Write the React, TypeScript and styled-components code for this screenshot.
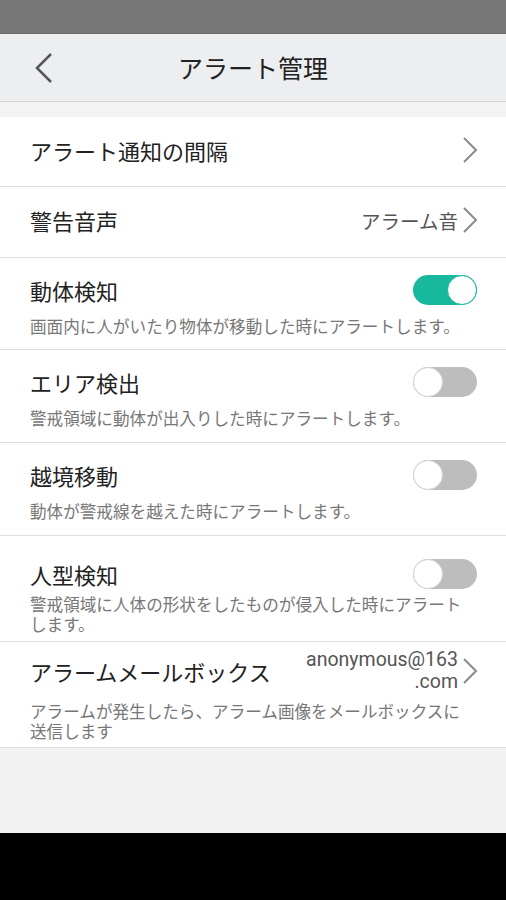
import React from "react";
import styled, { createGlobalStyle } from "styled-components";

const GlobalStyle = createGlobalStyle`
  html, body { margin: 0; padding: 0; }
  body {
    font-family: "Noto Sans CJK JP", "Noto Sans", sans-serif;
    background: #f2f2f2;
  }
  * { box-sizing: border-box; }
`;

const Screen = styled.div`
  width: 506px;
  height: 900px;
  display: flex;
  flex-direction: column;
  background: #f2f2f2;
  overflow: hidden;
`;

const StatusBar = styled.div`
  height: 34px;
  flex: none;
  background: #777777;
  border-bottom: 1px solid #6a6a6a;
`;

const Header = styled.header`
  height: 68px;
  flex: none;
  display: grid;
  grid-template-columns: 80px 1fr 80px;
  align-items: center;
  background: #eceef0;
  border-bottom: 1px solid #d2d4d6;
`;

const BackButton = styled.div`
  display: flex;
  align-items: center;
  padding-left: 34px;
  padding-top: 1px;
`;

const Title = styled.h1`
  margin: 0 0 2px;
  text-align: center;
  font-size: 25px;
  font-weight: 400;
  color: #222;
`;

const Spacer = styled.div`
  height: 15px;
  flex: none;
  background: #f3f3f3;
`;

const List = styled.div`
  flex: none;
  display: flex;
  flex-direction: column;
  background: #fff;
`;

const NavRow = styled.div<{ $h: number }>`
  height: ${(p) => p.$h}px;
  display: flex;
  align-items: center;
  justify-content: space-between;
  padding: 0 28px 4px 30px;
  border-bottom: 1px solid #dedede;
  background: #fff;
`;

const ToggleRow = styled.div<{ $pt: number; $gap: number; $pb: number }>`
  display: flex;
  flex-direction: column;
  padding: ${(p) => p.$pt}px 28px ${(p) => p.$pb}px 30px;
  gap: ${(p) => p.$gap}px;
  border-bottom: 1px solid #dedede;
  background: #fff;
`;

const TitleLine = styled.div`
  display: flex;
  align-items: center;
  justify-content: space-between;
  min-height: 30px;
`;

const Label = styled.span`
  font-size: 22px;
  line-height: 30px;
  color: #222;
`;

const Sub = styled.p`
  margin: 0;
  width: 440px;
  font-size: 16.6px;
  line-height: 20px;
  color: #777;
`;

const Value = styled.div`
  display: flex;
  align-items: center;
  gap: 4px;
`;

const ValueText = styled.span`
  font-size: 19.5px;
  color: #555;
`;

const EmailText = styled.span`
  font-family: Roboto, "Noto Sans", sans-serif;
  font-size: 19.5px;
  line-height: 22px;
  color: #555;
  text-align: right;
  width: 156px;
  word-break: break-all;
`;

const Switch = styled.div<{ $on: boolean }>`
  width: 64px;
  height: 30px;
  border-radius: 15px;
  flex: none;
  position: relative;
  background: ${(p) => (p.$on ? "#17b89e" : "#bdbdbd")};
  margin-right: 1px;
`;

const Knob = styled.div<{ $on: boolean }>`
  position: absolute;
  top: 0;
  ${(p) => (p.$on ? "right: 0;" : "left: 0;")}
  width: 30px;
  height: 30px;
  border-radius: 50%;
  background: #fff;
  border: 1.5px solid ${(p) => (p.$on ? "#17b89e" : "#d6d6d6")};
`;

const Filler = styled.div`
  flex: 1;
  background: #f2f2f2;
`;

const NavBar = styled.div`
  height: 67px;
  flex: none;
  background: #000;
`;

const Chevron = () => (
  <svg width="16" height="28" viewBox="0 0 16 28" fill="none">
    <polyline points="2,2 14,14 2,26" stroke="#8a8a8a" strokeWidth="2" />
  </svg>
);

const BackChevron = () => (
  <svg width="20" height="32" viewBox="0 0 20 32" fill="none">
    <polyline points="17,2 3,16 17,30" stroke="#555" strokeWidth="2.5" />
  </svg>
);

const Toggle = ({ on }: { on: boolean }) => (
  <Switch $on={on}>
    <Knob $on={on} />
  </Switch>
);

export default function App() {
  return (
    <>
      <GlobalStyle />
      <Screen>
        <StatusBar />
        <Header>
          <BackButton>
            <BackChevron />
          </BackButton>
          <Title>アラート管理</Title>
          <div />
        </Header>
        <Spacer />
        <List>
          <NavRow $h={70}>
            <Label>アラート通知の間隔</Label>
            <Chevron />
          </NavRow>
          <NavRow $h={71}>
            <Label>警告音声</Label>
            <Value>
              <ValueText>アラーム音</ValueText>
              <Chevron />
            </Value>
          </NavRow>
          <ToggleRow $pt={17} $gap={11} $pb={13}>
            <TitleLine>
              <Label>動体検知</Label>
              <Toggle on />
            </TitleLine>
            <Sub>画面内に人がいたり物体が移動した時にアラートします。</Sub>
          </ToggleRow>
          <ToggleRow $pt={17} $gap={11} $pb={14}>
            <TitleLine>
              <Label>エリア検出</Label>
              <Toggle on={false} />
            </TitleLine>
            <Sub>警戒領域に動体が出入りした時にアラートします。</Sub>
          </ToggleRow>
          <ToggleRow $pt={17} $gap={11} $pb={14}>
            <TitleLine>
              <Label>越境移動</Label>
              <Toggle on={false} />
            </TitleLine>
            <Sub>動体が警戒線を越えた時にアラートします。</Sub>
          </ToggleRow>
          <ToggleRow $pt={23} $gap={5} $pb={7}>
            <TitleLine>
              <Label>人型検知</Label>
              <Toggle on={false} />
            </TitleLine>
            <Sub>警戒領域に人体の形状をしたものが侵入した時にアラートします。</Sub>
          </ToggleRow>
          <ToggleRow $pt={7} $gap={8} $pb={6}>
            <TitleLine>
              <Label>アラームメールボックス</Label>
              <Value>
                <EmailText>
                  anonymous@163
                  <wbr />
                  .com
                </EmailText>
                <Chevron />
              </Value>
            </TitleLine>
            <Sub>アラームが発生したら、アラーム画像をメールボックスに送信します</Sub>
          </ToggleRow>
        </List>
        <Filler />
        <NavBar />
      </Screen>
    </>
  );
}
